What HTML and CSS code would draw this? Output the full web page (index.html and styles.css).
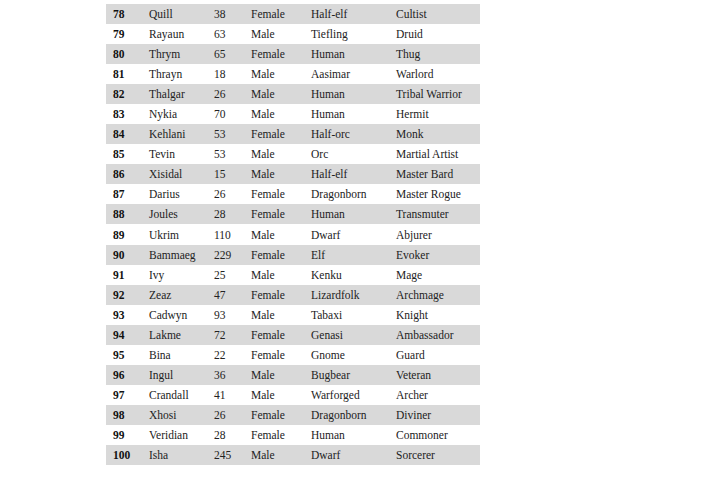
FILE: index.html
```html
<!DOCTYPE html>
<html>
<head>
<meta charset="utf-8">
<link rel="stylesheet" href="styles.css">
</head>
<body>
<div class="page">
  <div class="table">
    <div class="row shade"><span class="num">78</span><span>Quill</span><span>38</span><span>Female</span><span>Half-elf</span><span>Cultist</span></div>
    <div class="row"><span class="num">79</span><span>Rayaun</span><span>63</span><span>Male</span><span>Tiefling</span><span>Druid</span></div>
    <div class="row shade"><span class="num">80</span><span>Thrym</span><span>65</span><span>Female</span><span>Human</span><span>Thug</span></div>
    <div class="row"><span class="num">81</span><span>Thrayn</span><span>18</span><span>Male</span><span>Aasimar</span><span>Warlord</span></div>
    <div class="row shade"><span class="num">82</span><span>Thalgar</span><span>26</span><span>Male</span><span>Human</span><span>Tribal Warrior</span></div>
    <div class="row"><span class="num">83</span><span>Nykia</span><span>70</span><span>Male</span><span>Human</span><span>Hermit</span></div>
    <div class="row shade"><span class="num">84</span><span>Kehlani</span><span>53</span><span>Female</span><span>Half-orc</span><span>Monk</span></div>
    <div class="row"><span class="num">85</span><span>Tevin</span><span>53</span><span>Male</span><span>Orc</span><span>Martial Artist</span></div>
    <div class="row shade"><span class="num">86</span><span>Xisidal</span><span>15</span><span>Male</span><span>Half-elf</span><span>Master Bard</span></div>
    <div class="row"><span class="num">87</span><span>Darius</span><span>26</span><span>Female</span><span>Dragonborn</span><span>Master Rogue</span></div>
    <div class="row shade"><span class="num">88</span><span>Joules</span><span>28</span><span>Female</span><span>Human</span><span>Transmuter</span></div>
    <div class="row"><span class="num">89</span><span>Ukrim</span><span>110</span><span>Male</span><span>Dwarf</span><span>Abjurer</span></div>
    <div class="row shade"><span class="num">90</span><span>Bammaeg</span><span>229</span><span>Female</span><span>Elf</span><span>Evoker</span></div>
    <div class="row"><span class="num">91</span><span>Ivy</span><span>25</span><span>Male</span><span>Kenku</span><span>Mage</span></div>
    <div class="row shade"><span class="num">92</span><span>Zeaz</span><span>47</span><span>Female</span><span>Lizardfolk</span><span>Archmage</span></div>
    <div class="row"><span class="num">93</span><span>Cadwyn</span><span>93</span><span>Male</span><span>Tabaxi</span><span>Knight</span></div>
    <div class="row shade"><span class="num">94</span><span>Lakme</span><span>72</span><span>Female</span><span>Genasi</span><span>Ambassador</span></div>
    <div class="row"><span class="num">95</span><span>Bina</span><span>22</span><span>Female</span><span>Gnome</span><span>Guard</span></div>
    <div class="row shade"><span class="num">96</span><span>Ingul</span><span>36</span><span>Male</span><span>Bugbear</span><span>Veteran</span></div>
    <div class="row"><span class="num">97</span><span>Crandall</span><span>41</span><span>Male</span><span>Warforged</span><span>Archer</span></div>
    <div class="row shade"><span class="num">98</span><span>Xhosi</span><span>26</span><span>Female</span><span>Dragonborn</span><span>Diviner</span></div>
    <div class="row"><span class="num">99</span><span>Veridian</span><span>28</span><span>Female</span><span>Human</span><span>Commoner</span></div>
    <div class="row shade"><span class="num">100</span><span>Isha</span><span>245</span><span>Male</span><span>Dwarf</span><span>Sorcerer</span></div>
  </div>
</div>
</body>
</html>
```

FILE: styles.css
```css
html, body {
  margin: 0;
  padding: 0;
  background: #ffffff;
}

.page {
  padding: 4px 0 0 106px;
}

.table {
  width: 374px;
  font-family: "Liberation Serif", "Times New Roman", serif;
  font-size: 11.5px;
  color: #222222;
}

.row {
  display: grid;
  grid-template-columns: 36px 65px 37px 60px 85px 1fr;
  align-items: center;
  height: 20px;
  padding-left: 7px;
  white-space: nowrap;
}

.row:nth-child(12) {
  height: 21px;
}

.shade {
  background: #d9d9d9;
}

.num {
  font-weight: bold;
  color: #111111;
}
```
